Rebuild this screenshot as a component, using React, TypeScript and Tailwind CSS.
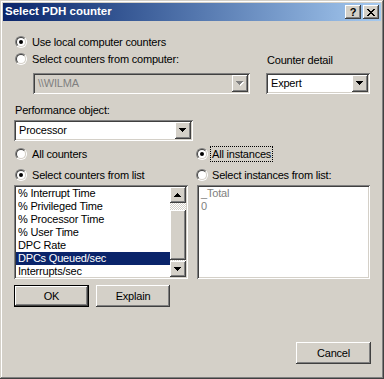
import * as React from 'react'

const RAISED =
  'shadow-[inset_-1px_-1px_#404040,inset_1px_1px_#ffffff,inset_-2px_-2px_#808080,inset_2px_2px_#d4d0c8]'
const SUNKEN =
  'shadow-[inset_1px_1px_#808080,inset_-1px_-1px_#ffffff,inset_2px_2px_#404040,inset_-2px_-2px_#d4d0c8]'

const ARROW_DOWN = 'M0 0h7v1H0zM1 1h5v1H1zM2 2h3v1H2zM3 3h1v1H3z'
const ARROW_UP = 'M3 0h1v1H3zM2 1h3v1H2zM1 2h5v1H1zM0 3h7v1H0z'

function Arrow({ up, disabled }: { up?: boolean; disabled?: boolean }) {
  const d = up ? ARROW_UP : ARROW_DOWN
  return (
    <svg width="8" height="5" viewBox="0 0 8 5" shapeRendering="crispEdges">
      {disabled && <path d={d} fill="#ffffff" transform="translate(1 1)" />}
      <path d={d} fill={disabled ? '#808080' : '#000000'} />
    </svg>
  )
}

function Radio({ checked }: { checked?: boolean }) {
  return (
    <div className="h-[12px] w-[12px] shrink-0 rounded-full border border-t-[#808080] border-l-[#808080] border-b-white border-r-white">
      <div className="flex h-full w-full items-center justify-center rounded-full border border-t-[#404040] border-l-[#404040] border-b-[#d4d0c8] border-r-[#d4d0c8] bg-white">
        {checked && <div className="h-[4px] w-[4px] rounded-full bg-black" />}
      </div>
    </div>
  )
}

function RadioRow({
  label,
  checked,
  focused,
  offset,
}: {
  label: string
  checked?: boolean
  focused?: boolean
  offset?: boolean
}) {
  return (
    <div className={`flex h-[17px] items-center ${offset ? 'pl-[1px]' : ''}`}>
      <Radio checked={checked} />
      {focused ? (
        <span className="ml-[2px] h-[16px] border border-dotted border-black px-[1px] leading-[14px]">
          {label}
        </span>
      ) : (
        <span className={`${offset ? 'ml-[5px]' : 'ml-[4px]'} leading-[14px]`}>{label}</span>
      )}
    </div>
  )
}

function ComboBox({
  value,
  disabled,
  className,
}: {
  value: string
  disabled?: boolean
  className?: string
}) {
  return (
    <div
      className={`flex h-[21px] p-[2px] ${SUNKEN} ${
        disabled ? 'bg-[#d4d0c8] text-[#808080]' : 'bg-white'
      } ${className ?? ''}`}
    >
      <div className="flex-1 pl-[3px] leading-[17px]">{value}</div>
      <div className={`flex h-[17px] w-[16px] items-center justify-center bg-[#d4d0c8] ${RAISED}`}>
        <Arrow disabled={disabled} />
      </div>
    </div>
  )
}

function Button({
  label,
  isDefault,
  className,
}: {
  label: string
  isDefault?: boolean
  className?: string
}) {
  if (isDefault) {
    return (
      <div className={`h-[22px] border border-black ${className ?? ''}`}>
        <div className={`flex h-full w-full items-center justify-center bg-[#d4d0c8] ${RAISED}`}>
          {label}
        </div>
      </div>
    )
  }
  return (
    <div
      className={`flex h-[22px] items-center justify-center bg-[#d4d0c8] ${RAISED} ${className ?? ''}`}
    >
      {label}
    </div>
  )
}

const COUNTERS = [
  '% Interrupt Time',
  '% Privileged Time',
  '% Processor Time',
  '% User Time',
  'DPC Rate',
  'DPCs Queued/sec',
  'Interrupts/sec',
]

const CHECKER =
  'bg-[image:repeating-conic-gradient(#ffffff_0%_25%,#d4d0c8_0%_50%)] bg-[length:2px_2px]'

export default function App() {
  return (
    <div
      className={`flex h-[379px] w-[384px] flex-col bg-[#d4d0c8] font-['Liberation_Sans',Arial,sans-serif] text-[11px] tracking-[-0.2px] text-black shadow-[inset_-1px_-1px_#404040,inset_1px_1px_#d4d0c8,inset_-2px_-2px_#808080,inset_2px_2px_#ffffff]`}
    >
      {/* title bar */}
      <div className="mx-[3px] mt-[3px] flex h-[18px] items-center bg-linear-to-r from-[#0a246a] to-[#a6caf0] px-[2px]">
        <span className="text-[11.5px] font-bold tracking-normal text-white">Select PDH counter</span>
        <div className="ml-auto flex gap-[2px]">
          <div className={`flex h-[14px] w-[16px] items-center justify-center bg-[#d4d0c8] ${RAISED}`}>
            <span className="text-[11px] font-bold leading-none tracking-normal">?</span>
          </div>
          <div className={`flex h-[14px] w-[16px] items-center justify-center bg-[#d4d0c8] ${RAISED}`}>
            <svg width="8" height="7" viewBox="0 0 8 7" shapeRendering="crispEdges">
              <path
                d="M0 0h2v1H0zM6 0h2v1H6zM1 1h2v1H1zM5 1h2v1H5zM2 2h4v1H2zM3 3h2v1H3zM2 4h4v1H2zM1 5h2v1H1zM5 5h2v1H5zM0 6h2v1H0zM6 6h2v1H6z"
                fill="#000000"
              />
            </svg>
          </div>
        </div>
      </div>

      <div className="flex flex-col pl-[14px]">
        {/* computer selection */}
        <div className="mt-[12px] flex">
          <div className="flex w-[236px] flex-col">
            <RadioRow label="Use local computer counters" checked offset />
            <RadioRow label="Select counters from computer:" offset />
            <ComboBox value={'\\\\WILMA'} disabled className="ml-[19px] mt-[6px] w-[217px]" />
          </div>
          <div className="ml-[16px] flex w-[104px] flex-col pt-[20px]">
            <div className="h-[14px] pl-[1px] leading-[14px]">Counter detail</div>
            <ComboBox value="Expert" className="mt-[6px] w-[104px]" />
          </div>
        </div>

        {/* performance object */}
        <div className="mt-[9px] h-[14px] pl-[1px] leading-[14px]">Performance object:</div>
        <ComboBox value="Processor" className="mt-[3px] w-[179px]" />

        {/* counters / instances */}
        <div className="mt-[4px] grid grid-cols-[174px_174px] gap-x-[8px]">
          <div className="flex flex-col">
            <RadioRow label="All counters" offset />
            <div className="mt-[4px]">
              <RadioRow label="Select counters from list" checked offset />
            </div>
            <div className={`mt-[2px] flex h-[94px] bg-white p-[2px] ${SUNKEN}`}>
              <div className="flex flex-1 flex-col">
                {COUNTERS.map((c, i) => (
                  <div
                    key={c}
                    className={`h-[13px] pl-[2px] leading-[13px] ${
                      i === 5 ? 'bg-[#0a246a] text-white' : ''
                    }`}
                  >
                    {c}
                  </div>
                ))}
              </div>
              <div className="flex w-[16px] flex-col">
                <div className={`flex h-[16px] items-center justify-center bg-[#d4d0c8] ${RAISED}`}>
                  <Arrow up />
                </div>
                <div className={`h-[7px] ${CHECKER}`} />
                <div className={`h-[50px] bg-[#d4d0c8] ${RAISED}`} />
                <div className={`h-[1px] ${CHECKER}`} />
                <div className={`flex h-[16px] items-center justify-center bg-[#d4d0c8] ${RAISED}`}>
                  <Arrow />
                </div>
              </div>
            </div>
          </div>

          <div className="flex flex-col">
            <RadioRow label="All instances" checked focused />
            <div className="mt-[4px]">
              <RadioRow label="Select instances from list:" />
            </div>
            <div className={`ml-[1px] mt-[2px] h-[94px] w-[173px] bg-white p-[2px] text-[#808080] ${SUNKEN}`}>
              <div className="h-[13px] pl-[2px] leading-[13px]">_Total</div>
              <div className="h-[13px] pl-[2px] leading-[13px]">0</div>
            </div>
          </div>
        </div>

        {/* OK / Explain */}
        <div className="mt-[6px] flex">
          <Button label="OK" isDefault className="w-[75px]" />
          <Button label="Explain" className="ml-[7px] w-[74px]" />
        </div>

        <Button label="Cancel" className="mr-[13px] mt-[35px] w-[75px] self-end" />
      </div>
    </div>
  )
}
